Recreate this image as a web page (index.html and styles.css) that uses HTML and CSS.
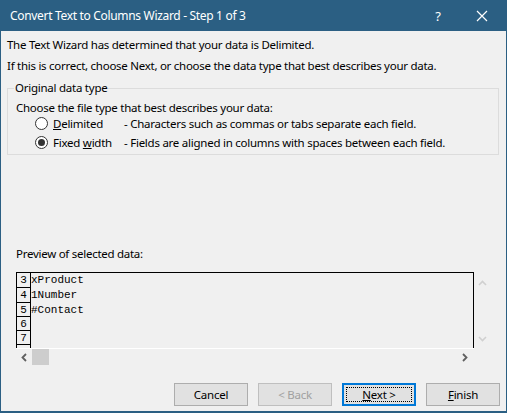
FILE: index.html
```html
<!DOCTYPE html>
<html>
<head>
<meta charset="utf-8">
<link rel="stylesheet" href="styles.css">
</head>
<body>
<div class="window">
  <div class="titlebar">
    <span class="title">Convert Text to Columns Wizard - Step 1 of 3</span>
    <span class="tb-help">?</span>
    <span class="tb-close">
      <svg width="12" height="12" viewBox="0 0 12 12"><path d="M1 1L11 11M11 1L1 11" stroke="#fff" stroke-width="1.2" fill="none"/></svg>
    </span>
  </div>
  <div class="content">
    <p class="line l1">The Text Wizard has determined that your data is Delimited.</p>
    <p class="line l2">If this is correct, choose Next, or choose the data type that best describes your data.</p>
    <fieldset class="group">
      <legend>Original data type</legend>
      <p class="line choose">Choose the file type that best describes your data:</p>
      <div class="radio-row first">
        <span class="radio"></span>
        <span class="rlabel"><u>D</u>elimited</span>
        <span class="rdesc">- Characters such as commas or tabs separate each field.</span>
      </div>
      <div class="radio-row">
        <span class="radio checked"></span>
        <span class="rlabel">Fixed <u>w</u>idth</span>
        <span class="rdesc">- Fields are aligned in columns with spaces between each field.</span>
      </div>
    </fieldset>
    <p class="line preview-label">Preview of selected data:</p>
    <div class="preview">
      <div class="pbox">
        <div class="prow r15"><span class="num">3</span><span class="data">xProduct</span></div>
        <div class="prow r15"><span class="num">4</span><span class="data">1Number</span></div>
        <div class="prow r14"><span class="num">5</span><span class="data">#Contact</span></div>
        <div class="prow r14"><span class="num">6</span><span class="data"></span></div>
        <div class="prow r14"><span class="num">7</span><span class="data"></span></div>
        <div class="prow r14"><span class="num"></span><span class="data"></span></div>
      </div>
      <div class="vscroll">
        <svg width="9" height="6" viewBox="0 0 9 6"><path d="M1 5L4.5 1.5L8 5" stroke="#d0d0d0" stroke-width="1.6" fill="none"/></svg>
        <svg width="9" height="6" viewBox="0 0 9 6"><path d="M1 1L4.5 4.5L8 1" stroke="#d0d0d0" stroke-width="1.6" fill="none"/></svg>
      </div>
      <div class="hscroll">
        <svg class="harrow" width="6" height="9" viewBox="0 0 6 9"><path d="M5 1L1.5 4.5L5 8" stroke="#606060" stroke-width="1.8" fill="none"/></svg>
        <span class="thumb"></span>
        <span class="hspace"></span>
        <svg class="harrow" width="6" height="9" viewBox="0 0 6 9"><path d="M1 1L4.5 4.5L1 8" stroke="#606060" stroke-width="1.8" fill="none"/></svg>
      </div>
    </div>
    <div class="buttons">
      <button class="btn">Cancel</button>
      <button class="btn disabled">&lt; Back</button>
      <button class="btn default"><span class="focus"><u>N</u>ext &gt;</span></button>
      <button class="btn"><u>F</u>inish</button>
    </div>
  </div>
</div>
</body>
</html>
```
FILE: styles.css
```css
* { box-sizing: border-box; }
html, body { margin: 0; padding: 0; }
body {
  width: 507px;
  height: 413px;
  overflow: hidden;
  font-family: "Noto Sans", "Open Sans", sans-serif;
  font-size: 11.5px;
  color: #000;
  background: #f0f0f0;
}
.window {
  width: 507px;
  height: 413px;
  display: flex;
  flex-direction: column;
  border: 1px solid #2b5f83;
  border-top: none;
  border-bottom-width: 2px;
  background: #f0f0f0;
}
.titlebar {
  height: 31px;
  flex: none;
  background: #2b5f83;
  color: #fff;
  display: flex;
  align-items: center;
  padding-left: 10px;
  font-size: 12px;
  margin: 0 -1px;
}
.title { flex: 1; letter-spacing: -0.32px; }
.tb-help { width: 46px; text-align: center; font-size: 13px; }
.tb-close { width: 46px; display: flex; justify-content: center; padding-right: 4px; }
.content {
  flex: 1;
  display: flex;
  flex-direction: column;
  padding: 0 6px 0 6px;
}
.line {
  margin: 0;
  line-height: 16px;
  height: 16px;
  white-space: nowrap;
  letter-spacing: -0.27px;
}
.l1 { margin-top: 6px; }
.l2 { margin-top: 5px; }
.group {
  margin: 6px 1px 0 0;
  padding: 6px 0 0 8px;
  border: 1px solid #dcdcdc;
  height: 75px;
  min-width: 0;
}
.group legend {
  padding: 0 1px;
  margin-left: -2px;
  line-height: 16px;
  letter-spacing: -0.25px;
}
.choose { margin-top: -2px; }
.radio-row {
  display: flex;
  align-items: center;
  height: 19px;
  padding-left: 19px;
  white-space: nowrap;
  letter-spacing: -0.25px;
}
.radio-row.first { margin-top: -2px; }
.radio {
  width: 13px;
  height: 13px;
  border: 1px solid #333;
  border-radius: 50%;
  background: #fff;
  flex: none;
  display: flex;
  align-items: center;
  justify-content: center;
}
.radio.checked::after {
  content: "";
  width: 7px;
  height: 7px;
  border-radius: 50%;
  background: #333;
}
.rlabel { margin-left: 5px; width: 71px; }
.preview-label { margin-top: 91px; padding-left: 9px; }
.preview {
  margin: 10px 0 0 9px;
  display: grid;
  grid-template-columns: 458px 17px;
  grid-template-rows: 76px 17px;
}
.pbox {
  border: 1px solid #000;
  border-bottom: none;
  overflow: hidden;
  background: #f0f0f0;
}
.prow { display: flex; }
.r15 { height: 15px; }
.r14 { height: 14px; }
.num {
  width: 14px;
  border-right: 1px solid #000;
  border-bottom: 1px solid #000;
  font-family: "Liberation Mono", monospace;
  font-size: 11px;
  line-height: 14px;
  text-align: center;
  flex: none;
}
.data {
  font-family: "Liberation Mono", monospace;
  font-size: 11px;
  line-height: 14px;
  padding-left: 0;
}
.vscroll {
  display: flex;
  flex-direction: column;
  justify-content: space-between;
  align-items: center;
  padding: 8px 0 6px 0;
}
.hscroll {
  grid-column: 1 / 2;
  display: flex;
  align-items: center;
  border-top: 1px solid #fff;
  padding: 0 6px 0 5px;
}
.thumb {
  width: 17px;
  height: 16px;
  background: #cdcdcd;
  margin-left: 5px;
}
.hspace { flex: 1; }
.buttons {
  display: flex;
  justify-content: flex-end;
  gap: 10px;
  margin-top: 18px;
}
.btn {
  width: 74px;
  height: 23px;
  background: #e1e1e1;
  border: 1px solid #adadad;
  font-family: "Noto Sans", "Open Sans", sans-serif;
  font-size: 11.5px;
  color: #000;
  padding: 0;
  display: flex;
  align-items: center;
  justify-content: center;
  letter-spacing: -0.25px;
}
.btn.disabled { color: #a0a0a0; border-color: #bfbfbf; }
.btn.default { border: 2px solid #0078d7; }
.focus {
  width: 66px;
  height: 15px;
  border: 1px dotted #000;
  display: flex;
  align-items: center;
  justify-content: center;
}
```
